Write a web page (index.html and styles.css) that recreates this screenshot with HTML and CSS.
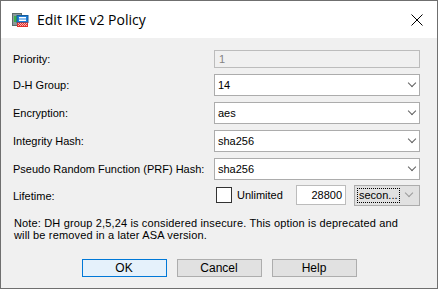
FILE: index.html
```html
<!DOCTYPE html>
<html lang="en">

<head>
    <meta charset="UTF-8">
    <title>Edit IKE v2 Policy</title>
    <link rel="stylesheet" href="styles.css">
</head>

<body>
    <div class="window">
        <div class="titlebar">
            <svg class="app-icon" width="17" height="16" viewBox="0 0 17 16">
                <rect x="0.5" y="1.5" width="9" height="12" fill="#8a9a9a" stroke="#5c6a6a"/>
                <rect x="2" y="4" width="3" height="6" fill="#3fae4a"/>
                <rect x="5" y="3.5" width="11" height="7" fill="#1e7fd8" stroke="#145a9c"/>
                <rect x="7" y="5" width="7" height="1.5" fill="#ffffff"/>
                <rect x="7" y="7.5" width="7" height="1.5" fill="#ffffff"/>
                <rect x="5" y="10.5" width="11" height="4.5" fill="#e0322d"/>
                <path d="M6 11h1v1h-1zM8 11h1v1h-1zM10 11h1v1h-1zM12 11h1v1h-1zM14 11h1v1h-1zM7 12h1v1h-1zM9 12h1v1h-1zM11 12h1v1h-1zM13 12h1v1h-1zM6 13h1v1h-1zM8 13h1v1h-1zM10 13h1v1h-1zM12 13h1v1h-1zM14 13h1v1h-1z" fill="#ffb0b0"/>
            </svg>
            <span class="title">Edit IKE v2 Policy</span>
            <svg class="close" width="12" height="12" viewBox="0 0 12 12">
                <path d="M0.5 0.5L11.5 11.5M11.5 0.5L0.5 11.5" stroke="#000" stroke-width="1"/>
            </svg>
        </div>

        <div class="content">
            <form class="fields">
                <label>Priority:</label>
                <div class="textbox disabled">1</div>

                <label>D-H Group:</label>
                <div class="combo">14<span class="chev"></span></div>

                <label>Encryption:</label>
                <div class="combo">aes<span class="chev"></span></div>

                <label>Integrity Hash:</label>
                <div class="combo">sha256<span class="chev"></span></div>

                <label>Pseudo Random Function (PRF) Hash:</label>
                <div class="combo">sha256<span class="chev"></span></div>

                <label>Lifetime:</label>
                <div class="lifetime">
                    <span class="checkbox"></span>
                    <span class="unlimited">Unlimited</span>
                    <span class="number">28800</span>
                    <span class="unit"><span class="focus">secon...</span><span class="chev"></span></span>
                </div>
            </form>

            <p class="note">Note: DH group 2,5,24 is considered insecure. This option is deprecated and<br>
                will be removed in a later ASA version.</p>

            <div class="buttons">
                <button type="button" class="default">OK</button>
                <button type="button">Cancel</button>
                <button type="button">Help</button>
            </div>
        </div>
    </div>
</body>

</html>
```

FILE: styles.css
```css
* {
    box-sizing: border-box;
}

body {
    margin: 0;
    font-family: "Liberation Sans", Arial, sans-serif;
    font-size: 11px;
    color: #000;
}

.window {
    width: 438px;
    height: 289px;
    border: 1px solid #6f6f6f;
    background-color: #f0f0f0;
    display: flex;
    flex-direction: column;
}

.titlebar {
    height: 37px;
    background-color: #fff;
    display: flex;
    align-items: center;
    padding: 0 14px 0 11px;
}

.app-icon {
    margin-right: 8px;
}

.title {
    font-family: "Open Sans", sans-serif;
    font-size: 14px;
    flex: 1;
}

.content {
    padding: 12px 18px 0 12px;
}

.fields {
    display: grid;
    grid-template-columns: 201px 1fr;
    row-gap: 6px;
    align-items: center;
}

.fields label {
    white-space: nowrap;
}

.textbox {
    height: 18px;
    border: 1px solid #bcbcbc;
    padding-left: 4px;
    line-height: 16px;
}

.textbox.disabled {
    color: #838383;
    background-color: #f0f0f0;
}

.combo {
    position: relative;
    height: 22px;
    border: 1px solid #acacac;
    background-color: #fff;
    padding-left: 3px;
    line-height: 20px;
}

.chev {
    position: absolute;
    right: 4px;
    top: 5px;
    width: 6px;
    height: 6px;
    border-right: 1px solid #606060;
    border-bottom: 1px solid #606060;
    transform: rotate(45deg);
}

.lifetime {
    display: flex;
    align-items: center;
    height: 22px;
    margin-top: -2px;
}

.checkbox {
    flex: none;
    width: 16px;
    height: 16px;
    border: 1px solid #333;
    background-color: #fff;
    margin: 0 5px 0 2px;
}

.unlimited {
    flex: none;
    width: 59px;
}

.number {
    flex: none;
    width: 50px;
    height: 20px;
    border: 1px solid #bcbcbc;
    background-color: #fff;
    text-align: right;
    padding-right: 3px;
    line-height: 18px;
}

.unit {
    flex: none;
    position: relative;
    margin-left: 8px;
    width: 66px;
    height: 21px;
    border: 1px solid #acacac;
    background-color: #e1e1e1;
    padding: 2px;
}

.focus {
    display: block;
    width: 43px;
    height: 15px;
    border: 1px dotted #000;
    line-height: 13px;
    padding-left: 1px;
}

.unit .chev {
    top: 4px;
    right: 7px;
    border-color: #9a9a9a;
}

.note {
    margin: 11px 0 0 1px;
    line-height: 12px;
    letter-spacing: 0.15px;
}

.buttons {
    display: flex;
    justify-content: center;
    gap: 10px;
    margin-top: 18px;
    padding-left: 6px;
}

button {
    width: 85px;
    height: 18px;
    font: inherit;
    font-size: 12px;
    border: 1px solid #adadad;
    background-color: #e1e1e1;
    padding: 0;
}

button.default {
    border-color: #0078d7;
    background-color: #e5f1fb;
}
```
